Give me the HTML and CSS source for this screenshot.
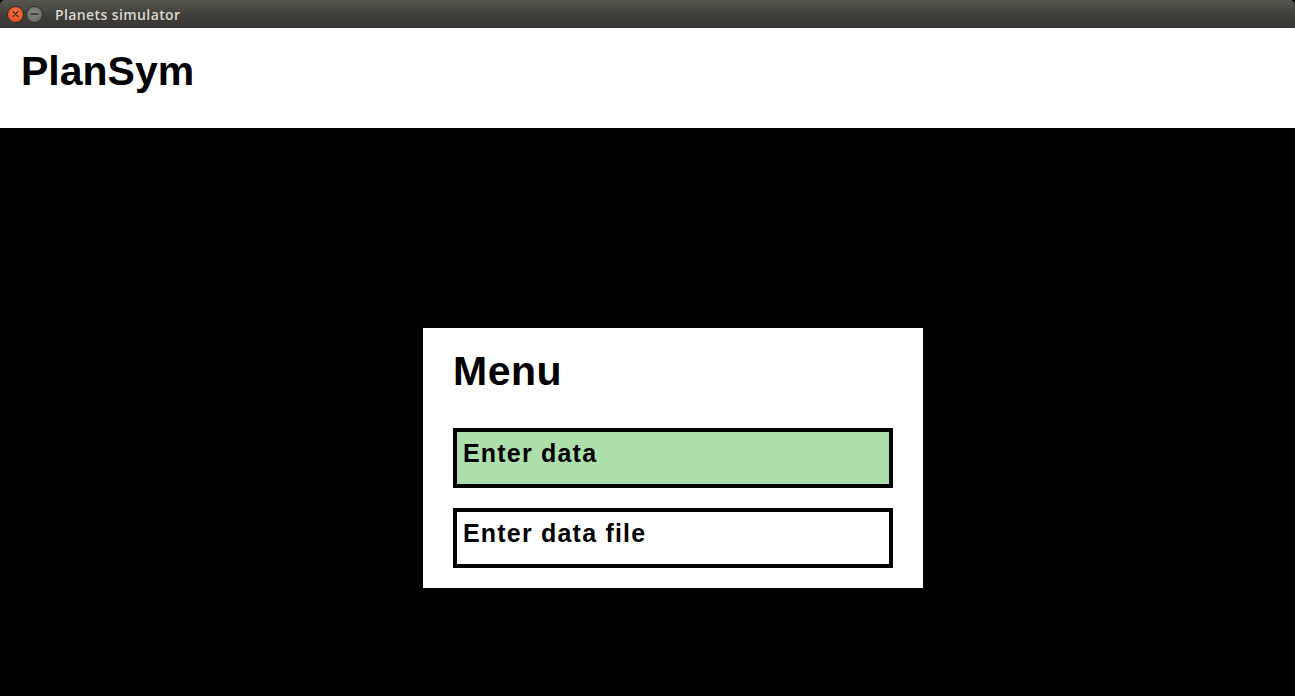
FILE: index.html
```html
<!DOCTYPE html>
<html>
<head>
<meta charset="utf-8">
<title>Planets simulator</title>
<link rel="stylesheet" href="styles.css">
</head>
<body>
<div class="window">
  <div class="titlebar">
    <div class="wbtn close">
      <svg width="16" height="16" viewBox="0 0 16 16"><path d="M5.5 5.5 L10.5 10.5 M10.5 5.5 L5.5 10.5" stroke="#3a1a0e" stroke-width="1.4" stroke-linecap="round"/></svg>
    </div>
    <div class="wbtn minimize">
      <svg width="16" height="16" viewBox="0 0 16 16"><path d="M4.5 8 L11.5 8" stroke="#2e2d2a" stroke-width="1.6" stroke-linecap="round"/></svg>
    </div>
    <div class="wtitle">Planets simulator</div>
  </div>
  <header class="appheader">
    <h1 class="brand">PlanSym</h1>
  </header>
  <main class="stage">
    <section class="menu">
      <h2 class="menu-title">Menu</h2>
      <div class="menu-list">
        <button class="menu-btn active">Enter data</button>
        <button class="menu-btn">Enter data file</button>
      </div>
    </section>
  </main>
</div>
</body>
</html>
```

FILE: styles.css
```css
html, body {
  margin: 0;
  padding: 0;
  height: 100%;
  background: #000;
}

.window {
  display: flex;
  flex-direction: column;
  width: 1295px;
  height: 696px;
  overflow: hidden;
}

.titlebar {
  height: 28px;
  flex: 0 0 28px;
  display: flex;
  align-items: center;
  background: linear-gradient(#57564f, #3d3c38 60%, #393834);
  border-radius: 5px 5px 0 0;
  padding-left: 7px;
  box-sizing: border-box;
}

.wbtn {
  width: 17px;
  height: 17px;
  border-radius: 50%;
  display: flex;
  align-items: center;
  justify-content: center;
  margin-right: 2px;
  box-sizing: border-box;
}

.wbtn svg {
  display: block;
}

.close {
  background: radial-gradient(circle at 50% 40%, #f6784a, #e45428 70%, #c8421d);
  border: 1px solid #2e2a26;
}

.minimize {
  background: radial-gradient(circle at 50% 40%, #8a8983, #6b6a65 70%, #5a5954);
  border: 1px solid #2e2d2a;
}

.wtitle {
  margin-left: 10px;
  font-family: "Open Sans", "DejaVu Sans", sans-serif;
  font-size: 14px;
  font-weight: 600;
  color: #dcd9d1;
  letter-spacing: 0.4px;
}

.appheader {
  flex: 0 0 100px;
  height: 100px;
  background: #fff;
  box-sizing: border-box;
  padding: 20px 0 0 21px;
}

.brand {
  margin: 0;
  font-family: "Liberation Sans", Arial, sans-serif;
  font-weight: bold;
  font-size: 41px;
  line-height: 47px;
  color: #000;
}

.stage {
  flex: 1;
  background: #000;
  display: flex;
  justify-content: flex-start;
  padding: 200px 0 0 423px;
  box-sizing: border-box;
}

.menu {
  width: 500px;
  height: 260px;
  background: #fff;
  box-sizing: border-box;
  padding: 20px 30px;
}

.menu-title {
  margin: 0 0 33px 0;
  font-family: "Liberation Sans", Arial, sans-serif;
  font-weight: bold;
  font-size: 41px;
  line-height: 47px;
  letter-spacing: 0.5px;
  color: #000;
}

.menu-list {
  display: flex;
  flex-direction: column;
  gap: 20px;
}

.menu-btn {
  display: flex;
  align-items: flex-start;
  width: 440px;
  height: 60px;
  box-sizing: border-box;
  border: 4px solid #000;
  background: #fff;
  margin: 0;
  padding: 7px 0 0 6px;
  text-align: left;
  font-family: "Liberation Sans", Arial, sans-serif;
  font-weight: bold;
  font-size: 25px;
  line-height: 28px;
  letter-spacing: 1.2px;
  color: #000;
  cursor: pointer;
}

.menu-btn.active {
  background: #addfad;
}
```
